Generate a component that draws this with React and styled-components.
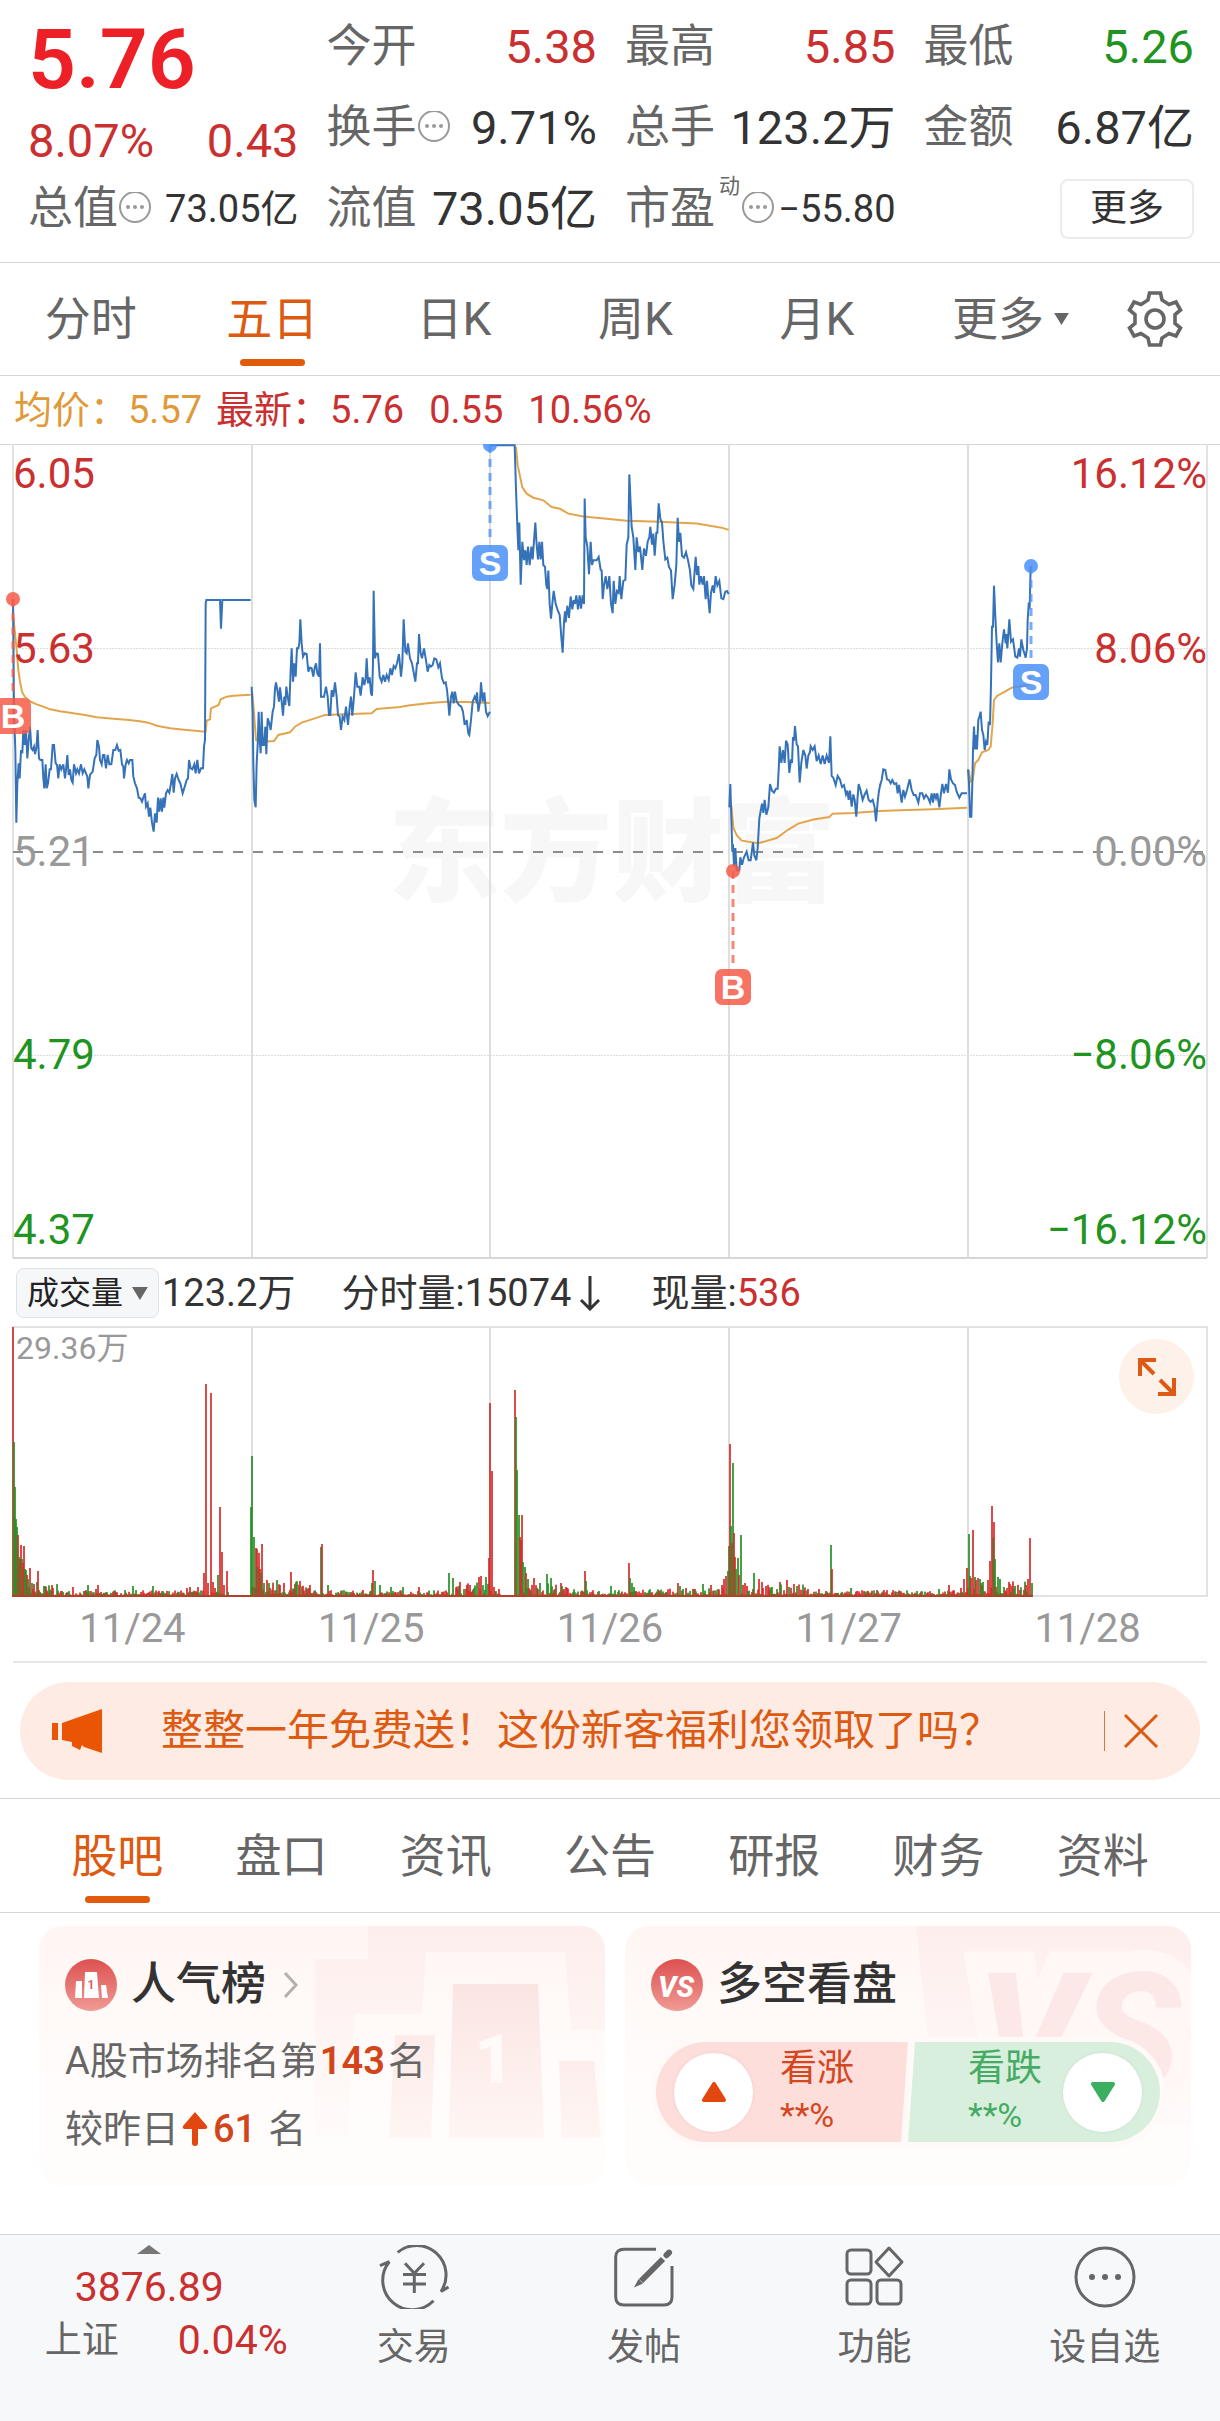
import React from "react";
import styled, { createGlobalStyle, css } from "styled-components";

const GlobalStyle = createGlobalStyle`
    * {
        box-sizing: border-box;
    }

    body {
        margin: 0;
        background: #fff;
        color: #333;
        font-family: Roboto, "Noto Sans CJK SC", sans-serif;
    }

    button, select {
        margin: 0;
        padding: 0;
        border: 0;
        background: none;
        color: inherit;
        font: inherit;
        cursor: pointer;
    }

    a {
        color: inherit;
        text-decoration: none;
    }

    svg {
        display: block;
    }
`;

const colors = {
    red: "#c9302f",
    green: "#1f9420",
    orange: "#dd5a12",
    grey: "#666",
    light: "#999",
    line: "#d6d6d6",
};

/* ---------- Quote header ---------- */

const Header = styled.header`
    display: grid;
    grid-template-columns: repeat(4, 1fr);
    column-gap: 28px;
    padding: 6px 26px 13px 28px;
    border-bottom: 1px solid ${colors.line};
`;

const Column = styled.div`
    display: flex;
    flex-direction: column;
    min-width: 0;
`;

const Price = styled.div`
    height: 108px;
    line-height: 108px;
    font-size: 84px;
    font-weight: 600;
    color: #ee2027;
`;

const Change = styled.div`
    display: flex;
    justify-content: space-between;
    height: 54px;
    line-height: 54px;
    font-size: 47px;
    color: ${colors.red};
`;

const Cell = styled.div`
    display: flex;
    align-items: center;
    justify-content: ${(props) => (props.$end ? "flex-end" : "space-between")};
    height: 81px;
    white-space: nowrap;
`;

const Label = styled.span`
    display: flex;
    align-items: center;
    font-size: 45px;
    line-height: 54px;
    color: ${colors.grey};
`;

const Sup = styled.sup`
    align-self: flex-start;
    width: 26px;
    padding-left: 4px;
    font-size: 21px;
    line-height: 21px;
    margin-top: -6px;
`;

const Value = styled.span`
    font-size: ${(props) => (props.$small ? "38px" : "47px")};
    line-height: 54px;
    color: ${(props) => props.$color || "#333"};
`;

const MoreButton = styled.button`
    width: 134px;
    height: 60px;
    border: 2px solid #ebebeb;
    border-radius: 8px;
    font-size: 37px;
    line-height: 54px;
`;

/* ---------- Tabs ---------- */

const Tabs = styled.nav`
    display: grid;
    grid-template-columns: ${(props) => (props.$sections ? "repeat(7, 1fr)" : "repeat(6, 182fr) 131fr")};
    height: ${(props) => (props.$sections ? "115px" : "113px")};
    padding: 0 ${(props) => (props.$sections ? "35px" : "0")};
    border-bottom: 1px solid ${colors.line};
    border-top: ${(props) => (props.$sections ? `1px solid ${colors.line}` : "0")};
`;

const Tab = styled.button`
    position: relative;
    display: flex;
    align-items: center;
    justify-content: center;
    gap: 10px;
    padding-left: ${(props) => (props.$menu ? "24px" : "0")};
    font-size: 46px;
    line-height: 56px;
    color: ${(props) => (props.$active ? colors.orange : colors.grey)};

    ${(props) => props.$active && css`
        &::after {
            content: "";
            position: absolute;
            bottom: 9px;
            left: 50%;
            width: 65px;
            height: 7px;
            margin-left: -32px;
            border-radius: 4px;
            background: #e25a0c;
        }
    `}
`;

const SettingsButton = styled.button`
    display: flex;
    align-items: center;
    justify-content: center;
`;

/* ---------- Price chart ---------- */

const Averages = styled.div`
    display: flex;
    align-items: center;
    height: 68px;
    padding-left: 14px;
    font-size: 38px;
    line-height: 48px;
    color: ${colors.red};
    white-space: pre;
`;

const Average = styled.span`
    margin-right: ${(props) => (props.$tight ? "14px" : "25px")};
    color: ${(props) => props.$color || "inherit"};
`;

const ChartBox = styled.section`
    position: relative;

    > svg {
        width: 100%;
        height: auto;
    }
`;

const TradeLayer = styled.svg`
    position: absolute;
    inset: 0;
    font-family: "Liberation Sans", sans-serif;
`;

const Scale = styled.div`
    position: absolute;
    inset: 0;
    display: grid;
    grid-template-columns: 1fr 1fr;
    grid-template-rows: 60fr 290fr 116fr 290fr 60fr;
    align-items: center;
    padding: 0 13px;
    pointer-events: none;
`;

const Tick = styled.span`
    font-size: 42px;
    line-height: 48px;
    color: ${(props) => props.$color};
    text-align: ${(props) => (props.$right ? "right" : "left")};
`;

/* ---------- Volume ---------- */

const VolumeBar = styled.div`
    display: flex;
    align-items: center;
    height: 66px;
    padding-left: 16px;
    font-size: 38px;
    line-height: 48px;
    white-space: nowrap;
`;

const SelectBox = styled.label`
    display: flex;
    align-items: center;
    width: 143px;
    height: 50px;
    margin-right: 3px;
    padding: 0 10px;
    border: 1px solid #dfe2e6;
    border-radius: 8px;
    background: #f6f7f9;
`;

const Select = styled.select`
    appearance: none;
    width: 106px;
    font-size: 32px;
    line-height: 44px;
    color: #222;
`;

const VolumeItem = styled.span`
    display: flex;
    align-items: center;
    margin-right: 46px;

    em {
        font-style: normal;
        color: ${colors.red};
    }
`;

const VolumeMax = styled.span`
    position: absolute;
    top: 2px;
    left: 16px;
    font-size: 32px;
    line-height: 40px;
    color: ${colors.light};
`;

const ExpandButton = styled.button`
    position: absolute;
    top: 13px;
    right: 26px;
    display: flex;
    align-items: center;
    justify-content: center;
    width: 75px;
    height: 75px;
    border-radius: 50%;
    background: #fdf1e9;
`;

const Dates = styled.div`
    display: grid;
    grid-template-columns: repeat(5, 1fr);
    margin: 0 13px;
    height: 66px;
    border-bottom: 2px solid #e5e5e5;
    font-size: 40px;
    line-height: 64px;
    text-align: center;
    color: ${colors.light};
`;

/* ---------- Banner ---------- */

const Banner = styled.div`
    display: flex;
    align-items: center;
    height: 98px;
    margin: 19px 20px 18px;
    padding: 0 40px 0 32px;
    border-radius: 49px;
    background: #feece4;
    color: ${colors.orange};
`;

const BannerLink = styled.a`
    flex: 1;
    margin-left: 59px;
    font-size: 42px;
    line-height: 54px;
    white-space: nowrap;
`;

const CloseButton = styled.button`
    display: flex;
    align-items: center;
    height: 40px;
    padding-left: 17px;
    border-left: 1px solid #d9763f;
`;

/* ---------- Cards ---------- */

const Cards = styled.section`
    display: grid;
    grid-template-columns: 1fr 1fr;
    gap: 20px;
    padding: 13px 29px 48px 39px;
`;

const Card = styled.article`
    position: relative;
    height: 260px;
    padding: 33px 26px 0;
    border-radius: 24px;
    overflow: hidden;
    background: linear-gradient(#fff6f3, #fffcfb 60%, #fffdfc);
`;

const Backdrop = styled.svg`
    position: absolute;
    top: 0;
    right: 0;
`;

const CardTitle = styled.h2`
    position: relative;
    display: flex;
    align-items: center;
    height: 52px;
    margin: 0;
    font-size: 45px;
    font-weight: 500;
    line-height: 52px;

    span {
        margin: 0 17px 0 14px;
    }
`;

const CardLine = styled.p`
    position: relative;
    display: flex;
    align-items: center;
    height: 68px;
    margin: ${(props) => (props.$first ? "16px 0 0" : "0")};
    font-size: 38px;
    line-height: 48px;
    color: ${colors.grey};

    strong {
        margin: 0 ${(props) => (props.$first ? "3px" : "12px")} 0 2px;
        font-weight: ${(props) => (props.$first ? 600 : 500)};
        color: #d2451a;
    }
`;

const Vote = styled.div`
    position: relative;
    display: grid;
    grid-template-columns: 1fr 1fr;
    height: 110px;
    margin: 26px 0 0;
    border: 5px solid #fffaf8;
    border-radius: 55px;
    overflow: hidden;
    background: #fffaf8;
`;

const VoteSide = styled.button`
    display: flex;
    align-items: center;
    height: 100px;
    text-align: left;
    font-size: 37px;
    line-height: 46px;

    ${(props) => props.$down
        ? css`
            flex-direction: row-reverse;
            gap: 21px;
            padding-right: 18px;
            background: #d8efde;
            color: #46ab65;
            clip-path: polygon(7px 0, 100% 0, 100% 100%, 0 100%);
        `
        : css`
            gap: 27px;
            padding-left: 18px;
            background: #fddedb;
            color: #d2481f;
            clip-path: polygon(0 0, 100% 0, calc(100% - 7px) 100%, 0 100%);
        `}

    small {
        display: block;
        font-size: 34px;
    }
`;

const VoteKnob = styled.span`
    display: flex;
    align-items: center;
    justify-content: center;
    width: 79px;
    height: 79px;
    border-radius: 50%;
    background: #fff;
    box-shadow: 0 0 4px rgba(0, 0, 0, 0.06);
`;

/* ---------- Bottom bar ---------- */

const BottomBar = styled.footer`
    display: grid;
    grid-template-columns: 298fr repeat(4, 230fr);
    height: 187px;
    border-top: 1px solid ${colors.line};
    background: #f7f8fa;
`;

const IndexButton = styled.button`
    display: flex;
    flex-direction: column;
    align-items: center;
    padding-top: 10px;
    color: ${colors.red};
    font-size: 41px;
    line-height: 53px;
`;

const IndexValue = styled.span`
    margin-top: 7px;
`;

const IndexRow = styled.span`
    display: flex;
    justify-content: space-between;
    width: 243px;
    margin-left: 34px;

    span {
        font-size: 37px;
        color: ${colors.grey};
    }
`;

const Action = styled.button`
    display: flex;
    flex-direction: column;
    align-items: center;
    padding-top: 10px;
    font-size: 37px;
    line-height: 48px;
    color: ${colors.grey};

    svg {
        margin-bottom: 15px;
    }
`;

/* ---------- Icons ---------- */

const MoreDots = () => (
    <svg width="34" height="34" viewBox="0 0 34 34" fill="#999">
        <circle cx="17" cy="15" r="15" fill="none" stroke="#999" strokeWidth="2" />
        <circle cx="10" cy="15" r="2" />
        <circle cx="17" cy="15" r="2" />
        <circle cx="24" cy="15" r="2" />
    </svg>
);

const Caret = ({ width = 15, height = 12 }) => (
    <svg width={width} height={height} viewBox="0 0 16 13" fill="#666">
        <path d="M0 0H16L8 13Z" />
    </svg>
);

const Gear = () => (
    <svg width="60" height="60" viewBox="-30 -30 60 60" fill="none" stroke="#666" strokeWidth="3.6">
        <path d="M-5.500 -26H5.500L7 -19L14 -14.500L21 -17L25.500 -9L20 -4.500V4.500L25.500 9L21 17L14 14.500L7 19L5.500 26H-5.500L-7 19L-14 14.500L-21 17L-25.500 9L-20 4.500V-4.500L-25.500 -9L-21 -17L-14 -14.500L-7 -19Z" />
        <circle r="9" />
    </svg>
);

const Expand = () => (
    <svg width="38" height="38" viewBox="0 0 38 38" fill="none" stroke="#dd5a12" strokeWidth="4">
        <path d="M2 18V2H18M3 3L16 16M36 20V36H20M35 35L22 22" />
    </svg>
);

const Megaphone = () => (
    <svg width="50" height="44" viewBox="0 0 50 44" fill="#e95504">
        <path d="M0 14H6V31H0Z" />
        <path d="M10 14L50 0V44L32 38L30 36L28 41L20 37V33L10 31Z" />
    </svg>
);

const Close = () => (
    <svg width="38" height="38" viewBox="0 0 38 38" fill="none" stroke="#dd5a12" strokeWidth="3">
        <path d="M3 3L35 35M35 3L3 35" />
    </svg>
);

const PodiumIcon = () => (
    <svg width="52" height="52" viewBox="0 0 52 52">
        <defs>
            <linearGradient id="badge" x2="0" y2="1">
                <stop stopColor="#dc5150" />
                <stop offset="1" stopColor="#f09a95" />
            </linearGradient>
        </defs>
        <circle cx="26" cy="26" r="26" fill="url(#badge)" />
        <path d="M11 22H17V39H10ZM20 13H32L34 39H19ZM36 26H41L43 39H37Z" fill="#fff" />
        <text x="26" y="30" fontSize="12" fontWeight="700" textAnchor="middle" fill="#d9605c">1</text>
    </svg>
);

const VersusIcon = () => (
    <svg width="52" height="52" viewBox="0 0 52 52">
        <circle cx="26" cy="26" r="26" fill="url(#badge)" />
        <text x="25" y="38" fontSize="29" fontWeight="800" fontStyle="italic" textAnchor="middle" fill="#fff">VS</text>
    </svg>
);

const Chevron = () => (
    <svg width="16" height="26" viewBox="0 0 16 26" fill="none" stroke="#b5b0ae" strokeWidth="3">
        <path d="M2 1L13 13L2 25" />
    </svg>
);

const RiseArrow = () => (
    <svg width="32" height="34" viewBox="0 0 32 34" fill="#e2470f">
        <path d="M16 0L28 14Q29 17 26 17H19V31Q19 34 16 34Q13 34 13 31V17H6Q3 17 4 14Z" />
    </svg>
);

const Triangle = ({ down }) => (
    <svg width="26" height="20" viewBox="0 0 26 20" strokeWidth="4" strokeLinejoin="round"
        fill={down ? "#3bae60" : "#e2470f"} stroke={down ? "#3bae60" : "#e2470f"}>
        <path d={down ? "M3 2H23L13 18Z" : "M3 18H23L13 2Z"} />
    </svg>
);

const iconProps = {
    width: 70,
    height: 64,
    viewBox: "0 0 70 64",
    fill: "none",
    stroke: "#666",
    strokeWidth: 3,
};

const TradeIcon = () => (
    <svg {...iconProps}>
        <path d="M18.700 7.300A29.500 29.500 0 0 1 62 46.500L69.500 42M54.500 55.700A29.500 29.500 0 0 1 10.300 16.700L1 20.700" />
        <path d="M26 18.300L35.300 28.300L45 18.300M35.300 28V48M24 29.500H47M24 39H47" />
    </svg>
);

const PostIcon = () => (
    <svg {...iconProps}>
        <path d="M47 4.300H15Q6.700 4.300 6.700 12V52Q6.700 60 15 60H55Q63 60 63 52V21" />
        <path d="M60 7.700L57.500 10.200" strokeWidth="6" strokeLinecap="round" />
        <path d="M54 14L32 36" strokeWidth="6" />
        <path d="M29.500 34L34 38.500L25 42.500Z" fill="#666" stroke="none" />
    </svg>
);

const FeatureIcon = () => (
    <svg {...iconProps}>
        <rect x="8" y="5" width="24" height="24" rx="4" />
        <rect x="8" y="35" width="24" height="24" rx="4" />
        <rect x="38" y="35" width="24" height="24" rx="4" />
        <path d="M50 3L63 17L50 31L37 17Z" strokeLinejoin="round" />
    </svg>
);

const OptionIcon = () => (
    <svg {...iconProps}>
        <circle cx="35" cy="32" r="29" />
        <g fill="#666" stroke="none">
            <circle cx="22" cy="32" r="3" />
            <circle cx="35" cy="32" r="3" />
            <circle cx="48" cy="32" r="3" />
        </g>
    </svg>
);

/* ---------- Chart data ---------- */

// Each trace carries its own unit grid, price is the blue line and mean the yellow one
const traces = [
    {
        transform: "translate(0 -14) scale(0.33333)",
        price: "39,510 40,600 42,850 46,960 49,1178 52,1060 56,1000 59,1045 63,960 67,970 70,900 74,945 78,900 82,985 86,930 90,890 94,955 98,960 102,950 105,972 109,955 113,900 117,985 121,990 127,990 130,1045 133,1075 137,1003 140,1075 144,1060 149,1018 153,1018 158,945 162,945 167,1000 171,1005 175,1045 179,1003 184,1018 190,1003 195,1045 198,1020 202,975 206,1035 210,1018 214,1050 218,1058 222,1003 228,1030 232,1018 237,1030 243,1003 248,1030 253,1018 258,1030 262,1040 265,1075 270,1035 278,1025 284,985 289,975 292,930 297,950 300,990 305,1003 309,975 313,975 318,1015 323,975 328,1003 334,1003 340,960 346,960 351,945 356,962 361,960 366,1003 370,1010 372,1045 377,1003 381,990 386,1000 390,990 397,990 400,1040 405,1060 411,1075 416,1103 421,1105 426,1115 430,1103 435,1090 438,1130 443,1120 447,1160 451,1133 456,1178 461,1205 465,1150 470,1178 474,1103 478,1145 482,1105 486,1145 490,1103 493,1133 498,1090 503,1080 508,1088 513,1060 517,1032 521,1088 525,1045 530,1032 536,1050 541,1060 548,1090 554,1070 560,1050 564,1045 567,990 572,1015 577,1018 583,1003 587,1030 592,990 597,1030 603,1015 609,1015 612,950 615,930 617,520 619,510 660,510 663,596 667,510 752,510",
        mean: "40,560 44,600 50,660 55,720 60,755 66,785 74,800 92,815 110,823 130,830 150,838 180,844 220,850 255,855 290,862 340,866 380,869 420,874 445,878 470,887 510,895 560,900 617,905 620,872 630,868 633,835 656,825 662,808 680,800 700,797 752,794",
    },
    {
        transform: "translate(0 -14) scale(0.33333)",
        price: "755,770 758,850 760,1000 763,1110 767,1132 770,1000 773,945 776,845 779,930 782,970 785,845 788,945 792,945 796,890 799,973 803,865 808,880 812,900 818,845 822,830 825,775 828,757 832,780 837,815 840,772 845,815 849,857 853,800 856,825 859,770 863,800 868,828 872,720 875,655 879,755 883,700 887,740 891,655 895,655 898,640 901,568 905,640 909,680 914,670 920,672 925,725 930,713 935,715 940,740 944,713 948,700 952,730 957,740 960,640 963,800 972,800 978,770 983,800 987,855 991,855 995,780 1000,800 1005,757 1010,800 1014,855 1019,860 1023,900 1028,860 1033,870 1038,830 1044,885 1049,830 1053,800 1057,857 1062,800 1067,727 1072,770 1078,770 1082,797 1088,742 1093,765 1097,745 1100,685 1104,760 1109,742 1113,790 1116,797 1119,700 1121,482 1125,685 1129,670 1134,672 1139,740 1145,755 1150,735 1155,755 1160,735 1166,750 1171,715 1176,735 1181,708 1186,715 1191,700 1197,672 1203,740 1207,700 1211,568 1216,665 1220,670 1224,640 1230,685 1236,700 1241,727 1246,755 1251,700 1254,700 1257,612 1262,670 1266,685 1272,655 1277,685 1283,725 1288,705 1293,710 1298,705 1303,685 1309,688 1315,712 1320,700 1326,745 1332,760 1337,757 1341,780 1345,820 1348,857 1353,800 1357,785 1361,820 1365,785 1370,815 1377,825 1384,830 1389,845 1394,885 1400,870 1405,910 1408,915 1413,870 1418,815 1424,800 1428,810 1431,787 1435,845 1440,815 1443,757 1448,815 1453,787 1458,845 1463,858 1470,845",
        mean: "757,790 762,850 768,930 790,935 822,933 835,915 870,907 885,890 905,878 960,860 975,855 1115,850 1130,837 1200,831 1230,826 1290,819 1340,815 1400,816 1470,819",
    },
    {
        transform: "translate(480 -14) scale(0.33333 0.36996)",
        price: "30,41 104,41 108,160 112,260 115,325 118,250 122,418 127,302 132,352 136,325 140,365 144,315 149,365 154,315 158,350 162,300 166,250 170,310 174,350 178,302 182,350 186,302 190,365 195,370 199,420 202,430 205,380 209,470 213,510 217,470 221,435 227,470 233,487 239,500 244,560 248,602 252,520 255,490 257,520 262,475 267,508 272,450 277,485 281,460 285,470 289,447 294,485 299,447 303,483 308,447 312,470 314,185 317,290 322,315 327,390 332,302 336,365 340,352 350,352 356,343 362,378 365,380 368,457 372,420 377,395 382,430 388,395 393,470 398,495 401,408 406,470 411,435 416,440 419,395 424,457 430,408 436,405 440,310 445,290 448,120 452,200 455,262 460,290 466,378 470,290 475,330 480,315 487,378 492,320 498,340 503,302 508,290 511,262 516,310 520,280 524,340 529,278 532,278 536,198 541,240 546,250 550,300 556,350 562,345 567,370 573,380 578,457 584,418 589,365 593,237 597,302 601,278 606,340 612,345 618,330 624,352 630,380 634,420 640,430 647,343 651,392 655,368 658,418 663,395 668,418 672,395 677,457 681,408 685,457 689,495 693,440 698,420 702,440 707,395 712,420 718,408 724,455 730,457 736,437 741,435 746,443",
        mean: "108,45 113,95 120,125 127,155 140,172 160,183 190,190 215,208 240,213 265,226 310,234 380,240 440,245 540,248 600,251 650,253 725,264 746,270",
    },
    {
        transform: "translate(480 -14) scale(0.33333 0.36996)",
        price: "748,1020 751,957 754,1050 757,1140 759,1120 762,1180 766,1130 770,1190 778,1190 781,1155 786,1175 792,1155 800,1140 806,1163 812,1163 819,1115 823,1150 829,1163 833,1130 838,1050 846,1010 850,1035 854,1000 859,1040 865,1020 870,957 876,975 882,980 888,970 893,970 896,920 899,855 904,900 909,865 914,900 918,840 923,850 928,927 933,890 936,900 939,830 942,840 945,800 950,850 954,855 959,953 964,900 970,865 976,880 980,915 985,880 990,870 992,855 998,865 1004,855 1010,895 1016,880 1022,903 1028,880 1034,903 1040,880 1047,900 1051,828 1055,935 1060,940 1067,960 1073,935 1080,945 1086,965 1092,960 1098,985 1102,975 1106,1000 1110,975 1115,1018 1120,985 1124,1000 1129,1045 1133,990 1136,957 1142,975 1148,1000 1154,985 1160,975 1166,1000 1172,1005 1178,1000 1184,1020 1188,1058 1193,1005 1197,975 1201,958",
        mean: "754,1015 760,1075 770,1095 785,1110 835,1117 890,1103 925,1080 955,1064 1000,1053 1048,1046 1058,1037 1120,1035 1200,1030",
    },
    {
        transform: "translate(860 -14) scale(0.33333)",
        price: "60,1066 65,1050 70,1018 76,1020 81,1048 87,1050 92,1060 97,1050 103,1062 109,1060 113,1090 117,1065 121,1090 125,1118 130,1080 135,1100 141,1080 149,1048 155,1080 161,1095 167,1095 175,1118 180,1090 187,1090 192,1105 198,1095 204,1103 210,1118 215,1090 219,1118 223,1090 228,1105 232,1090 238,1132 243,1090 247,1062 252,1090 258,1062 264,1088 268,1018 273,1048 279,1060 285,1065 290,1085 298,1103 305,1090 321,1090",
        mean: "60,1143 120,1141 220,1138 321,1133",
    },
    {
        transform: "translate(860 -14) scale(0.33333)",
        price: "324,1018 327,1060 330,1160 334,1160 337,1060 339,960 342,890 345,958 348,915 351,958 355,870 358,860 362,845 366,900 370,915 374,960 378,935 382,945 386,875 390,885 393,760 396,590 399,590 402,467 406,560 410,640 414,697 418,640 422,697 427,640 432,598 437,640 439,612 442,655 448,568 453,635 459,628 466,680 472,683 477,655 480,680 484,628 490,660 497,683 501,655 503,570 506,525 509,530 512,410",
        mean: "326,1020 332,1055 338,1050 345,1000 355,990 366,967 385,960 392,950 398,880 402,810 412,797 435,785 455,773 505,765 512,740",
    },
];

const dayLines = [252, 490, 729, 968];

// x and y of the trade, badge is the top of its box
const trades = [
    { kind: "B", x: 13, y: 155, badge: 254 },
    { kind: "S", x: 490, y: 1, badge: 101 },
    { kind: "B", x: 733, y: 427, badge: 525 },
    { kind: "S", x: 1031, y: 122, badge: 220 },
];

const ticks = [
    ["6.05", "16.12%", colors.red],
    ["5.63", "8.06%", colors.red],
    ["5.21", "0.00%", colors.light],
    ["4.79", "−8.06%", colors.green],
    ["4.37", "−16.12%", colors.green],
];

// x:height, r for a rising minute and g for a falling one
const spikes = "13:270r 14:155g 15:110g 16:78g 17:70g 18:62r 19:40g 20:38r 21:52r 22:38g 23:34r 24:51r 25:28g 26:27g 27:22r 28:18g 30:29r 32:14g 34:13r 37:15g 38:26r 44:11g 52:12r 73:10r 88:12g 98:12r 96:8r 133:11g 153:11g 187:9r 190:10r 198:10r 204:24r 206:213r 208:14r 211:204r 213:15r 215:9r 218:22g 220:90r 222:45r 224:12r 227:26r "
    + "251:90g 252:141g 254:60g 256:49r 257:48r 258:30g 259:44r 260:28r 261:24g 262:53r 264:14g 267:17r 269:14g 277:17g 280:12r 284:14r 291:25r 300:16r 321:50g 322:53r 328:12g 372:14g 373:27r 375:16g 380:12g 391:10g 403:10g 419:10r 449:24g 453:19g 460:15r 470:12r 479:20r 481:21r 486:20g 489:39r 490:194r 492:126r 494:10r 499:8r "
    + "515:207r 516:180g 517:127g 519:82g 520:60r 521:57r 522:82r 523:35g 525:30g 526:24r 528:18g 534:19r 540:14g 547:23g 551:19g 562:11g 566:10r 585:26r 586:16g 611:11g 629:34r 630:19g 632:14g 634:10g 678:14r 680:11g 695:8r 703:13g 711:12r 718:8g 722:12r 724:18r 726:21r 728:26g 729:51g "
    + "730:153r 731:71g 732:54r 733:134g 734:64r 735:40r 736:28g 738:39g 739:22r 741:62g 743:12r 745:14r 747:11r 754:24g 759:18r 762:15r 780:15r 787:17r 789:10g 794:13r 797:11g 808:8r 819:8r 831:52g 832:28r 851:9g 877:7r 900:6g 939:8g 949:12r 961:9r 964:18r 967:29r "
    + "969:63g 970:21g 971:19r 973:67r 975:20g 976:17r 978:19r 980:18g 983:15g 988:17r 990:36r 992:91r 993:59g 994:75r 995:38g 998:20g 1000:18g 1004:10g 1009:15r 1014:8g 1020:7r 1026:12r 1028:18r 1030:59r 1032:14g";

const quietSpans = [[229, 250], [501, 514]];
const busySpans = [[26, 60, 11], [252, 310, 14], [455, 488, 13], [523, 575, 13], [640, 727, 7], [736, 805, 11], [968, 1030, 14]];

const buildVolume = () => {
    const bars = new Map();
    let seed = 7;
    const random = () => {
        seed = (seed * 16807) % 2147483647;
        return seed / 2147483647;
    };

    for (let x = 13; x <= 1032; x += 1) {
        const quiet = quietSpans.some(([from, to]) => x >= from && x <= to);
        const busy = busySpans.find(([from, to]) => x >= from && x <= to);
        const size = quiet ? 0 : (busy ? busy[2] : 5);
        bars.set(x, [2 + random() ** 2 * size, quiet || random() > 0.48 ? "r" : "g"]);
    }

    spikes.split(" ").forEach((spike) => {
        const [x, rest] = spike.split(":");
        bars.set(Number(x), [parseInt(rest, 10), rest.slice(-1)]);
    });

    return [...bars].map(([x, [height, side]]) => ({ x, height, side }));
};

const volumeBars = buildVolume();

const PriceChart = () => (
    <ChartBox>
        <svg viewBox="0 0 1220 816" role="img" aria-label="五日走势">
            <text x="612" y="449" fontSize="112" fontWeight="900" textAnchor="middle" fill="#f7f7f7">东方财富</text>
            <g fill="none" stroke="#d6d6d6" strokeWidth="2">
                <path d="M0 0H1220" />
                <path d="M13 0V814M1207 0V814" stroke="#e2e2e2" />
                {dayLines.map((x) => <path key={x} d={`M${x} 0V814`} stroke="#dedede" />)}
                <path d="M13 814H1207" />
                <path d="M13 204.500H1207M13 611.500H1207" stroke="#ddd" strokeWidth="1" strokeDasharray="2 1" />
                <path d="M13 408H1207" stroke="#8c8c8c" strokeDasharray="10 10" />
            </g>
            {traces.map((trace) => (
                <g key={trace.price} transform={trace.transform} fill="none">
                    <polyline points={trace.mean} stroke="#e2a54c" strokeWidth="2" vectorEffect="non-scaling-stroke" />
                    <polyline points={trace.price} stroke="#3572b8" strokeWidth="2" vectorEffect="non-scaling-stroke" />
                </g>
            ))}
        </svg>
        <Scale>
            {ticks.map(([price, percent, color]) => (
                <React.Fragment key={price}>
                    <Tick $color={color}>{price}</Tick>
                    <Tick $color={color} $right>{percent}</Tick>
                </React.Fragment>
            ))}
        </Scale>
        <TradeLayer viewBox="0 0 1220 816">
            {trades.map(({ kind, x, y, badge }) => {
                const fill = kind === "B" ? "#f65b48" : "#4a8ff8";
                return (
                    <g key={x} fill={fill} fillOpacity="0.85">
                        <path d={`M${x} ${y}V${badge - 6}`} stroke={fill} strokeOpacity="0.75" strokeWidth="3" strokeDasharray="8 6" />
                        <circle cx={x} cy={y} r="7" />
                        <rect x={x - 18} y={badge} width="36" height="36" rx="7" />
                        <text x={x} y={badge + 30} fontSize="34" fontWeight="700" textAnchor="middle" fill="#fff" fillOpacity="1">{kind}</text>
                    </g>
                );
            })}
        </TradeLayer>
    </ChartBox>
);

const VolumeChart = () => (
    <ChartBox>
        <svg viewBox="0 0 1220 271" role="img" aria-label="成交量">
            <g fill="none" stroke="#dedede" strokeWidth="2">
                <path d="M13 1H1207V270H13Z" stroke="#e2e2e2" />
                {dayLines.map((x) => <path key={x} d={`M${x} 1V270`} />)}
            </g>
            {volumeBars.map(({ x, height, side }) => (
                <rect key={x} x={x - 1} y={271 - height} width="2" height={height} fill={side === "r" ? "#d42c2a" : "#259022"} fillOpacity="0.85" />
            ))}
            <path d="M12 270H1033" stroke="#b5402a" strokeWidth="2" />
        </svg>
        <VolumeMax>29.36万</VolumeMax>
        <ExpandButton aria-label="全屏"><Expand /></ExpandButton>
    </ChartBox>
);

const App = () => {
    return (
        <>
            <GlobalStyle />

            <Header>
                <Column>
                    <Price>5.76</Price>
                    <Change><span>8.07%</span><span>0.43</span></Change>
                    <Cell><Label>总值<MoreDots /></Label><Value $small>73.05亿</Value></Cell>
                </Column>
                <Column>
                    <Cell><Label>今开</Label><Value $color={colors.red}>5.38</Value></Cell>
                    <Cell><Label>换手<MoreDots /></Label><Value>9.71%</Value></Cell>
                    <Cell><Label>流值</Label><Value>73.05亿</Value></Cell>
                </Column>
                <Column>
                    <Cell><Label>最高</Label><Value $color={colors.red}>5.85</Value></Cell>
                    <Cell><Label>总手</Label><Value>123.2万</Value></Cell>
                    <Cell><Label>市盈<Sup>动</Sup><MoreDots /></Label><Value $small>−55.80</Value></Cell>
                </Column>
                <Column>
                    <Cell><Label>最低</Label><Value $color={colors.green}>5.26</Value></Cell>
                    <Cell><Label>金额</Label><Value>6.87亿</Value></Cell>
                    <Cell $end><MoreButton>更多</MoreButton></Cell>
                </Column>
            </Header>

            {/* Period tabs */}
            <Tabs>
                <Tab>分时</Tab>
                <Tab $active>五日</Tab>
                <Tab>日K</Tab>
                <Tab>周K</Tab>
                <Tab>月K</Tab>
                <Tab $menu>更多<Caret /></Tab>
                <SettingsButton aria-label="设置"><Gear /></SettingsButton>
            </Tabs>

            <Averages>
                <Average $tight $color="#e09a3a">均价：5.57</Average>
                <Average>最新：5.76</Average>
                <Average>0.55</Average>
                <Average>10.56%</Average>
            </Averages>
            <PriceChart />

            <VolumeBar>
                <SelectBox>
                    <Select aria-label="指标" defaultValue="volume">
                        <option value="volume">成交量</option>
                    </Select>
                    <Caret width={16} height={13} />
                </SelectBox>
                <VolumeItem>123.2万</VolumeItem>
                <VolumeItem>
                    分时量:15074
                    <svg width="34" height="36" viewBox="0 0 34 36" fill="none" stroke="#333" strokeWidth="3">
                        <path d="M19 1V34M10 25L19 34L28 25" />
                    </svg>
                </VolumeItem>
                <VolumeItem>现量:<em>536</em></VolumeItem>
            </VolumeBar>
            <VolumeChart />
            <Dates>
                <span>11/24</span>
                <span>11/25</span>
                <span>11/26</span>
                <span>11/27</span>
                <span>11/28</span>
            </Dates>

            <Banner>
                <Megaphone />
                <BannerLink href="#gift">整整一年免费送！这份新客福利您领取了吗？</BannerLink>
                <CloseButton aria-label="关闭"><Close /></CloseButton>
            </Banner>

            {/* Section tabs */}
            <Tabs $sections>
                <Tab $active>股吧</Tab>
                <Tab>盘口</Tab>
                <Tab>资讯</Tab>
                <Tab>公告</Tab>
                <Tab>研报</Tab>
                <Tab>财务</Tab>
                <Tab>资料</Tab>
            </Tabs>

            <Cards>
                <Card>
                    <Backdrop width="290" height="260" viewBox="276 0 290 260">
                        <defs>
                            <linearGradient id="band" x2="0" y2="1">
                                <stop stopColor="#fdeeec" />
                                <stop offset="1" stopColor="#fffbfa" />
                            </linearGradient>
                            <linearGradient id="block" x2="0" y2="1">
                                <stop stopColor="#fbe5e3" />
                                <stop offset="1" stopColor="#fef6f3" />
                            </linearGradient>
                        </defs>
                        <path d="M276 33H329V0H566V104H532L526 26H387L383 88H316L308 212H276Z" fill="url(#band)" />
                        <path d="M414 58H499L505 212H410ZM356 109H396L392 212H350ZM520 135H555L562 212H523Z" fill="url(#block)" />
                        <text x="455" y="157" fontSize="68" fontWeight="900" textAnchor="middle" fill="#fffaf8">1</text>
                    </Backdrop>
                    <CardTitle><PodiumIcon /><span>人气榜</span><Chevron /></CardTitle>
                    <CardLine $first>A股市场排名第<strong>143</strong>名</CardLine>
                    <CardLine>较昨日<RiseArrow /><strong>61</strong>名</CardLine>
                </Card>

                <Card>
                    <Backdrop width="290" height="260" viewBox="276 0 290 260">
                        <path d="M291 0H566V200H312Z" fill="url(#band)" />
                        <text x="352" y="164" fontSize="164" fontWeight="800" fontStyle="italic" fill="#fce9e7" stroke="#fff8f5" strokeWidth="42" paintOrder="stroke">VS</text>
                    </Backdrop>
                    <CardTitle><VersusIcon /><span>多空看盘</span></CardTitle>
                    <Vote>
                        <VoteSide>
                            <VoteKnob><Triangle /></VoteKnob>
                            <span>看涨<small>**%</small></span>
                        </VoteSide>
                        <VoteSide $down>
                            <VoteKnob><Triangle down /></VoteKnob>
                            <span>看跌<small>**%</small></span>
                        </VoteSide>
                    </Vote>
                </Card>
            </Cards>

            <BottomBar>
                <IndexButton>
                    <svg width="24" height="9" viewBox="0 0 24 9" fill="#777"><path d="M12 0L24 9H0Z" /></svg>
                    <IndexValue>3876.89</IndexValue>
                    <IndexRow><span>上证</span>0.04%</IndexRow>
                </IndexButton>
                <Action><TradeIcon />交易</Action>
                <Action><PostIcon />发帖</Action>
                <Action><FeatureIcon />功能</Action>
                <Action><OptionIcon />设自选</Action>
            </BottomBar>
        </>
    );
};

export default App;
